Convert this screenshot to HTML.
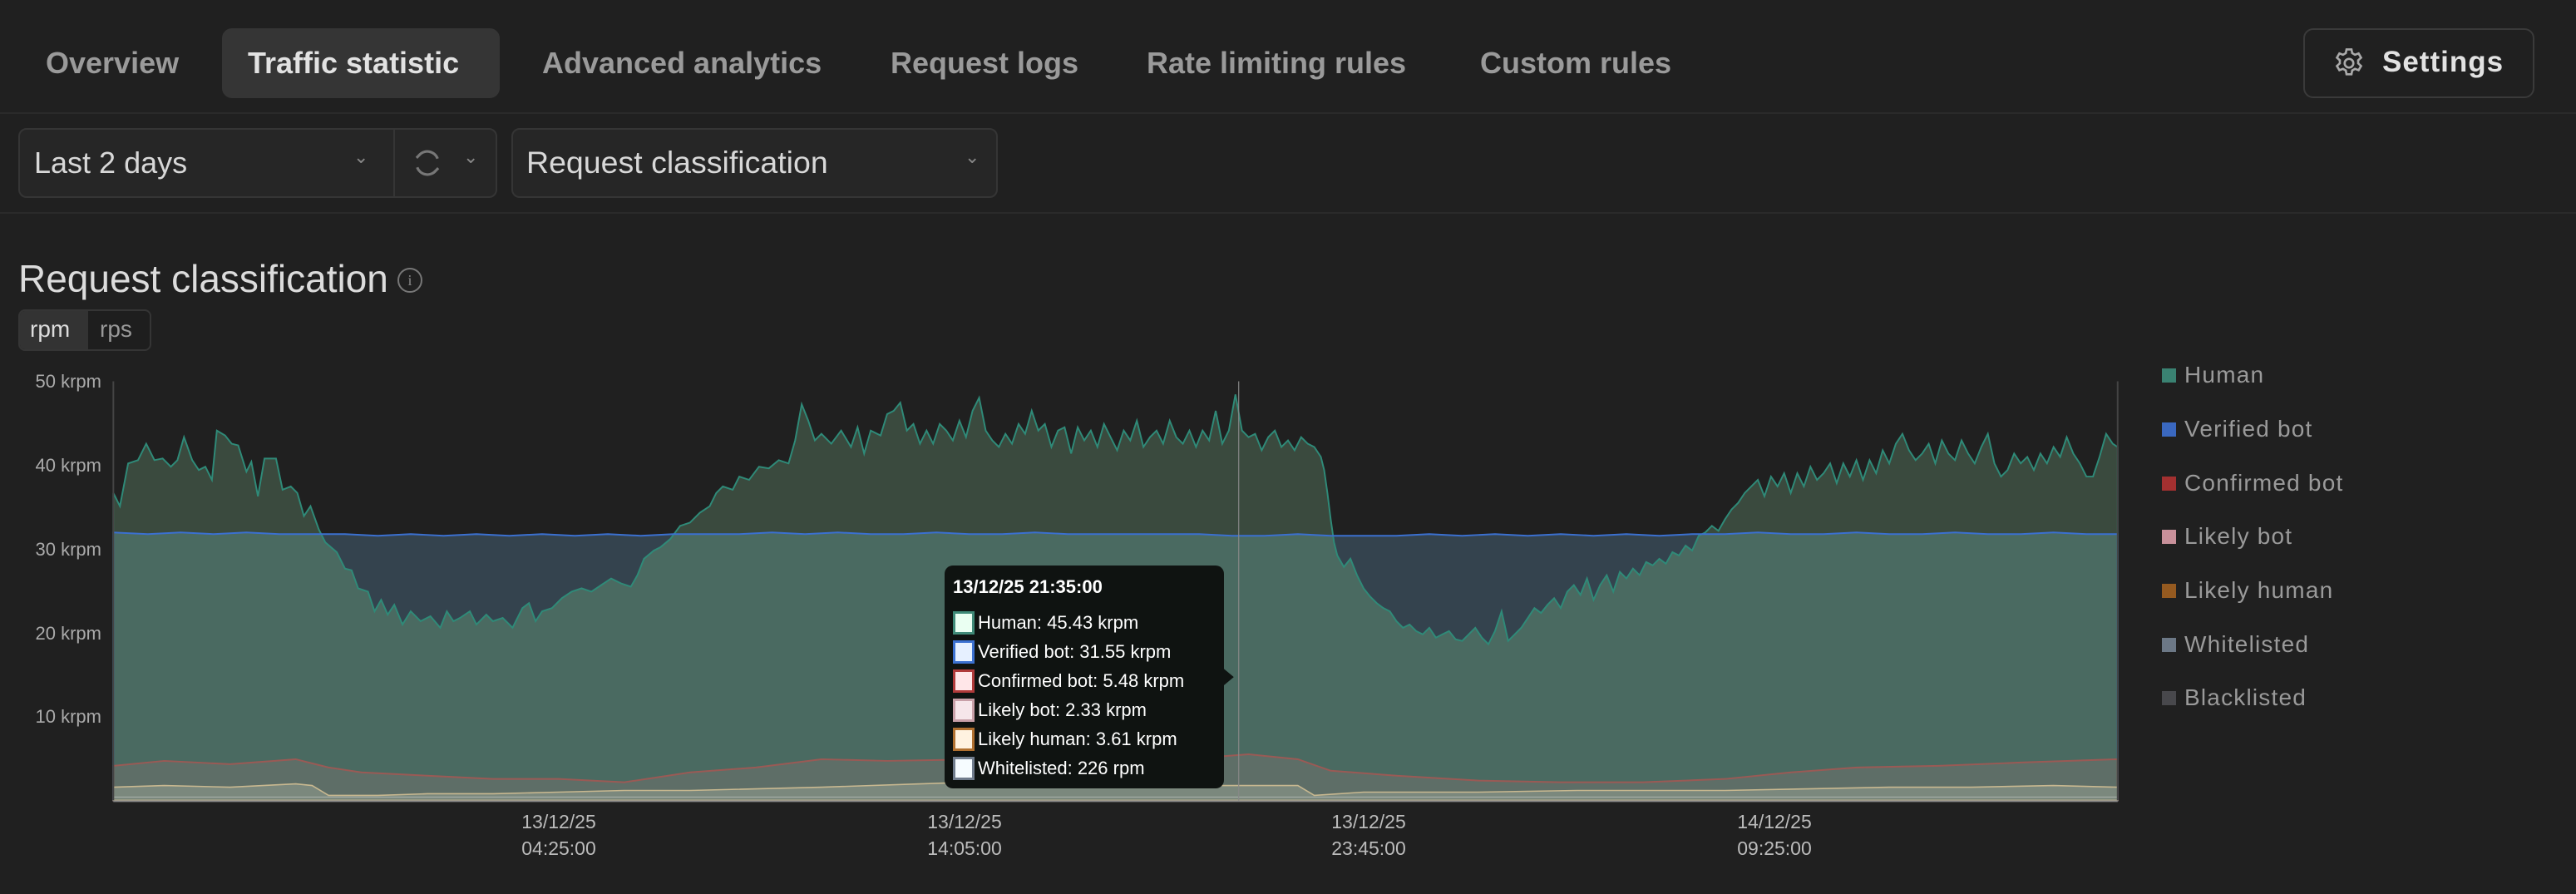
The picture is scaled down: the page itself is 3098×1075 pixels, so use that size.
<!DOCTYPE html>
<html><head><meta charset="utf-8"><style>
*{margin:0;padding:0;box-sizing:border-box}
body{width:3098px;height:1075px;background:#202020;font-family:"Liberation Sans",sans-serif;position:relative;overflow:hidden;color:#ddd}
.a{position:absolute;white-space:nowrap}
.tab{font-size:36px;font-weight:bold;color:#9a9a9a;top:55px}
.box{position:absolute;border:2px solid #353535;border-radius:10px;background:#262626}
.yl{position:absolute;right:2976px;font-size:22px;color:#aaa}
.xl{position:absolute;font-size:23px;color:#bbb;text-align:center;width:200px;line-height:32px}
.lg{position:absolute;left:2600px;font-size:28px;color:#9a9a9a;letter-spacing:1.2px}
.lg i{display:inline-block;width:17px;height:17px;margin-right:10px;vertical-align:0px}
.tt div{font-size:22px;color:#fff;height:35px;line-height:35px}
.tt i{display:inline-block;width:26px;height:28px;border:3px solid;vertical-align:-7px;margin-right:4px}
</style></head><body>
<div class="a" style="left:267px;top:34px;width:334px;height:84px;background:#353535;border-radius:12px"></div>
<div class="a tab" style="left:55px">Overview</div>
<div class="a tab" style="left:298px;color:#e2e2e2">Traffic statistic</div>
<div class="a tab" style="left:652px">Advanced analytics</div>
<div class="a tab" style="left:1071px">Request logs</div>
<div class="a tab" style="left:1379px">Rate limiting rules</div>
<div class="a tab" style="left:1780px">Custom rules</div>
<div class="a" style="left:2770px;top:34px;width:278px;height:84px;border:2px solid #3a3a3a;border-radius:12px"></div>
<svg class="a" style="left:2804px;top:55px" width="42" height="42" viewBox="0 0 24 24" fill="none" stroke="#aaa" stroke-width="1.5"><circle cx="12" cy="12" r="3"/><path d="M10.3 2.5h3.4l.5 2.6 1.9 1.1 2.5-.9 1.7 2.9-2 1.8v2.1l2 1.8-1.7 2.9-2.5-.9-1.9 1.1-.5 2.6h-3.4l-.5-2.6-1.9-1.1-2.5.9-1.7-2.9 2-1.8V10l-2-1.8 1.7-2.9 2.5.9 1.9-1.1z"/></svg>
<div class="a" style="left:2865px;top:55px;font-size:35px;font-weight:bold;color:#e2e2e2;letter-spacing:1px">Settings</div>
<div class="a" style="left:0;top:135px;width:3098px;height:2px;background:#2a2a2a"></div>
<div class="box" style="left:22px;top:154px;width:576px;height:84px"></div>
<div class="a" style="left:473px;top:156px;width:2px;height:80px;background:#353535"></div>
<div class="a" style="left:41px;top:175px;font-size:36px;color:#d8d8d8">Last 2 days</div>
<div class="a" style="left:425px;top:176px;font-size:22px;color:#888">&#8964;</div>
<svg class="a" style="left:493px;top:175px" width="42" height="42" viewBox="0 0 24 24" fill="none" stroke="#777" stroke-width="1.8"><path d="M19 9a7.5 7.5 0 0 0-13-2l-1.5 1.5M5 15a7.5 7.5 0 0 0 13 2l1.5-1.5"/></svg>
<div class="a" style="left:557px;top:176px;font-size:22px;color:#888">&#8964;</div>
<div class="box" style="left:615px;top:154px;width:585px;height:84px"></div>
<div class="a" style="left:633px;top:174px;font-size:37.5px;color:#d8d8d8">Request classification</div>
<div class="a" style="left:1160px;top:176px;font-size:22px;color:#888">&#8964;</div>
<div class="a" style="left:0;top:255px;width:3098px;height:2px;background:#2a2a2a"></div>
<div class="a" style="left:22px;top:308px;font-size:46px;color:#dcdcdc">Request classification</div>
<div class="a" style="left:478px;top:322px;width:30px;height:30px;border:2px solid #777;border-radius:50%;font-size:18px;color:#888;text-align:center;line-height:26px;font-family:'Liberation Serif',serif">i</div>
<div class="a" style="left:22px;top:372px;width:160px;height:50px;border:2px solid #353535;border-radius:8px;background:#1e1e1e"></div>
<div class="a" style="left:24px;top:374px;width:82px;height:46px;background:#333;border-radius:6px 0 0 6px"></div>
<div class="a" style="left:36px;top:380px;font-size:28px;color:#ddd">rpm</div>
<div class="a" style="left:120px;top:380px;font-size:28px;color:#999">rps</div>

<svg class="a" style="left:0;top:0" width="3098" height="1075" viewBox="0 0 1568 544" preserveAspectRatio="none">
<defs>
<path id="hum" d="M69,487 L69,300 73,308 78,282 84,280 89,270 94,280 99,279 104,284 108,280 112,266 117,280 121,286 125,284 129,292 132,262 137,265 141,270 145,271 150,287 153,281 157,302 161,279 168,279 172,298 177,296 181,300 185,314 189,308 194,322 198,330 205,336 210,346 214,347 218,358 224,360 228,372 232,365 236,374 240,368 245,380 250,372 256,378 262,375 268,382 272,372 276,378 280,376 286,372 290,380 296,374 300,378 306,376 312,382 318,370 322,367 326,378 330,372 336,370 342,364 348,360 354,358 360,360 366,356 372,352 378,355 384,357 388,350 392,340 398,335 402,333 408,328 414,320 420,318 426,312 432,308 436,300 440,296 446,298 450,290 456,292 462,284 468,285 474,280 480,282 484,268 488,246 492,256 496,268 500,264 506,270 512,262 518,272 522,260 526,276 530,262 536,265 540,252 544,250 548,245 552,262 556,258 560,270 564,262 568,270 572,258 576,262 580,268 584,256 588,266 592,250 596,242 600,262 604,268 608,272 612,264 616,270 620,258 624,264 628,250 632,262 636,258 640,272 644,262 648,260 652,276 656,260 660,268 664,262 668,272 672,258 676,266 680,274 684,262 688,268 692,256 696,272 700,266 704,262 708,270 712,256 716,266 720,270 724,262 728,272 732,262 736,268 740,250 744,270 748,262 752,240 756,262 760,266 764,264 768,274 772,266 776,262 780,272 784,268 788,274 792,266 796,270 800,272 804,278 806,286 808,300 810,316 812,330 814,338 818,345 822,340 826,350 830,358 834,363 838,367 842,370 846,372 850,378 854,382 858,380 862,384 866,386 870,382 874,388 878,386 882,384 886,389 890,390 894,386 898,382 902,388 906,392 910,384 914,372 918,390 922,386 926,382 930,376 934,370 938,373 942,368 946,364 950,370 954,360 958,356 962,362 966,352 970,365 974,356 978,350 982,360 986,348 990,352 994,346 998,350 1002,342 1006,344 1010,340 1014,343 1018,336 1022,338 1026,332 1030,335 1034,326 1038,324 1042,320 1046,323 1050,316 1054,310 1058,306 1062,300 1066,296 1070,292 1074,302 1078,290 1082,296 1086,288 1090,300 1094,288 1098,296 1102,284 1106,292 1110,288 1114,282 1118,294 1122,282 1126,290 1130,280 1134,292 1138,280 1142,288 1146,274 1150,282 1154,270 1158,264 1162,274 1166,280 1170,276 1174,270 1178,282 1182,268 1186,276 1190,280 1194,268 1198,276 1202,282 1206,272 1210,264 1214,282 1218,290 1222,286 1226,276 1230,282 1234,278 1238,286 1242,276 1246,282 1250,272 1254,278 1258,266 1262,276 1266,282 1270,290 1274,290 1278,278 1282,264 1286,270 1289,272 L1289,487 Z"/>
<path id="blu" d="M69,487 L69,324 90,325 110,324 130,325 150,324 170,325 190,325 210,325 230,326 250,325 270,326 290,325 310,326 330,325 350,326 370,325 390,326 410,325 430,325 450,325 470,324 490,325 510,324 530,325 550,325 570,324 590,325 610,325 630,324 650,325 670,325 690,325 710,325 730,325 750,326 770,326 790,325 810,326 830,326 850,326 870,325 890,326 910,325 930,326 950,325 970,326 990,325 1010,326 1030,325 1050,325 1070,324 1090,325 1110,325 1130,324 1150,325 1170,325 1190,324 1210,325 1230,325 1250,324 1270,325 1289,325 L1289,487 Z"/>
<clipPath id="cb"><use href="#blu"/></clipPath>
</defs>
<use href="#blu" fill="#34434e"/>
<use href="#hum" fill="#3a4a3e"/>
<use href="#hum" fill="#4a6a61" clip-path="url(#cb)"/>
<use href="#hum" fill="none" stroke="#2f8a78" stroke-width="1"/>
<use href="#blu" fill="none" stroke="#3b70d0" stroke-width="1"/>
<path d="M69,487 L69,466 100,463 140,465 180,462 200,467 220,470 260,472 300,474 340,474 380,476 420,470 460,467 500,462 540,463 600,462 640,460 680,462 720,462 760,459 790,462 810,469 850,472 900,475 950,476 1000,476 1050,474 1090,470 1130,467 1180,466 1230,464 1289,462 L1289,487Z" fill="#5e6e67" stroke="#9a5a55" stroke-width="1"/>
<path d="M69,487 L69,479 100,478 140,479 180,477 190,478 200,484 230,484 260,483 300,483 340,482 380,481 420,481 500,479 560,477 620,475 680,475 720,476 740,478 760,478 790,478 800,484 830,482 870,482 900,482 960,481 1050,481 1100,480 1150,479 1200,479 1250,478 1289,479 L1289,487Z" fill="#7b887d" stroke="#c8b890" stroke-width="0.8"/>
<path d="M69,485 L1289,485" stroke="#a8b0aa" stroke-width="0.6"/>
<path d="M69,232 V487 M1289,232 V487" stroke="#444" stroke-width="1"/>
<path d="M69,487.5 H1289" stroke="#888" stroke-width="1"/>
<path d="M754,232 V487" stroke="#888" stroke-width="0.6"/>
<path d="M745,407 L751,412 745,417Z" fill="#0f1311"/>
</svg>

<div class="yl" style="top:446px">50 krpm</div>
<div class="yl" style="top:547px">40 krpm</div>
<div class="yl" style="top:648px">30 krpm</div>
<div class="yl" style="top:749px">20 krpm</div>
<div class="yl" style="top:849px">10 krpm</div>
<div class="xl" style="left:572px;top:972px">13/12/25<br>04:25:00</div>
<div class="xl" style="left:1060px;top:972px">13/12/25<br>14:05:00</div>
<div class="xl" style="left:1546px;top:972px">13/12/25<br>23:45:00</div>
<div class="xl" style="left:2034px;top:972px">14/12/25<br>09:25:00</div>

<div class="a tt" style="left:1136px;top:680px;width:336px;height:268px;background:#0f1311;border-radius:10px;padding:8px 10px">
<div style="font-weight:bold;margin-bottom:8px">13/12/25 21:35:00</div>
<div><i style="border-color:#3f8a78;background:#eafff2"></i>Human: 45.43 krpm</div>
<div><i style="border-color:#3b70d0;background:#e6f0ff"></i>Verified bot: 31.55 krpm</div>
<div><i style="border-color:#b03a3a;background:#ffe6e8"></i>Confirmed bot: 5.48 krpm</div>
<div><i style="border-color:#c8a0a8;background:#f6e6ea"></i>Likely bot: 2.33 krpm</div>
<div><i style="border-color:#b07030;background:#fff2e0"></i>Likely human: 3.61 krpm</div>
<div><i style="border-color:#707c8c;background:#f6fcff"></i>Whitelisted: 226 rpm</div>
</div>

<div class="lg" style="top:435px"><i style="background:#3a8272"></i>Human</div>
<div class="lg" style="top:500px"><i style="background:#3a68c0"></i>Verified bot</div>
<div class="lg" style="top:565px"><i style="background:#a33030"></i>Confirmed bot</div>
<div class="lg" style="top:629px"><i style="background:#c8909a"></i>Likely bot</div>
<div class="lg" style="top:694px"><i style="background:#955a20"></i>Likely human</div>
<div class="lg" style="top:759px"><i style="background:#6c7886"></i>Whitelisted</div>
<div class="lg" style="top:823px"><i style="background:#48484c"></i>Blacklisted</div>
</body></html>
